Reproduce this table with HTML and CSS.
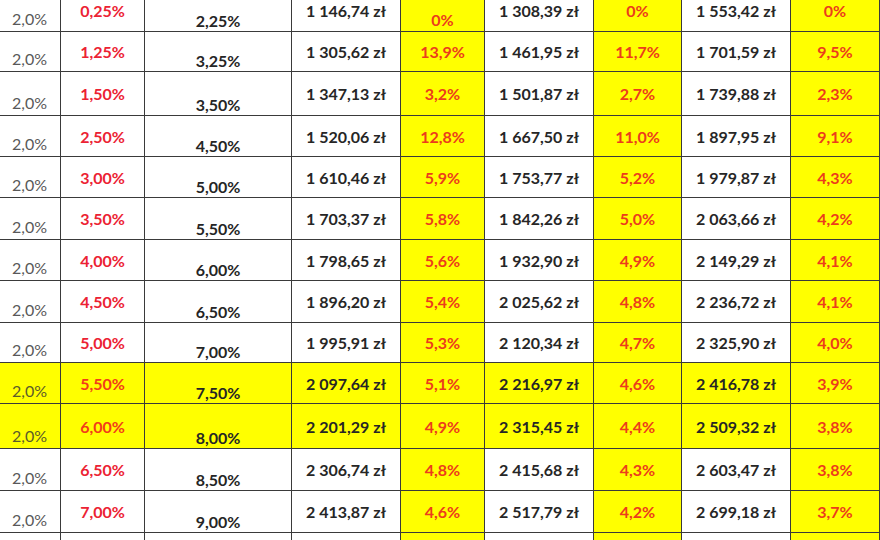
FILE: index.html
```html
<!DOCTYPE html>
<html lang="pl">
<head>
<meta charset="utf-8">
<title>Tabela rat</title>
<link rel="stylesheet" href="styles.css">
</head>
<body>
<div class="viewport">
  <div class="sheet">
    <div class="c c1">2,0%</div><div class="c c2">0,25%</div><div class="c c3">2,25%</div><div class="c c4">1 146,74 zł</div><div class="c cy low">0%</div><div class="c c4">1 308,39 zł</div><div class="c cy">0%</div><div class="c c4">1 553,42 zł</div><div class="c cy">0%</div>
    <div class="c c1">2,0%</div><div class="c c2">1,25%</div><div class="c c3">3,25%</div><div class="c c4">1 305,62 zł</div><div class="c cy">13,9%</div><div class="c c4">1 461,95 zł</div><div class="c cy">11,7%</div><div class="c c4">1 701,59 zł</div><div class="c cy">9,5%</div>
    <div class="c c1">2,0%</div><div class="c c2">1,50%</div><div class="c c3">3,50%</div><div class="c c4">1 347,13 zł</div><div class="c cy">3,2%</div><div class="c c4">1 501,87 zł</div><div class="c cy">2,7%</div><div class="c c4">1 739,88 zł</div><div class="c cy">2,3%</div>
    <div class="c c1">2,0%</div><div class="c c2">2,50%</div><div class="c c3">4,50%</div><div class="c c4">1 520,06 zł</div><div class="c cy">12,8%</div><div class="c c4">1 667,50 zł</div><div class="c cy">11,0%</div><div class="c c4">1 897,95 zł</div><div class="c cy">9,1%</div>
    <div class="c c1">2,0%</div><div class="c c2">3,00%</div><div class="c c3">5,00%</div><div class="c c4">1 610,46 zł</div><div class="c cy">5,9%</div><div class="c c4">1 753,77 zł</div><div class="c cy">5,2%</div><div class="c c4">1 979,87 zł</div><div class="c cy">4,3%</div>
    <div class="c c1">2,0%</div><div class="c c2">3,50%</div><div class="c c3">5,50%</div><div class="c c4">1 703,37 zł</div><div class="c cy">5,8%</div><div class="c c4">1 842,26 zł</div><div class="c cy">5,0%</div><div class="c c4">2 063,66 zł</div><div class="c cy">4,2%</div>
    <div class="c c1">2,0%</div><div class="c c2">4,00%</div><div class="c c3">6,00%</div><div class="c c4">1 798,65 zł</div><div class="c cy">5,6%</div><div class="c c4">1 932,90 zł</div><div class="c cy">4,9%</div><div class="c c4">2 149,29 zł</div><div class="c cy">4,1%</div>
    <div class="c c1">2,0%</div><div class="c c2">4,50%</div><div class="c c3">6,50%</div><div class="c c4">1 896,20 zł</div><div class="c cy">5,4%</div><div class="c c4">2 025,62 zł</div><div class="c cy">4,8%</div><div class="c c4">2 236,72 zł</div><div class="c cy">4,1%</div>
    <div class="c c1">2,0%</div><div class="c c2">5,00%</div><div class="c c3">7,00%</div><div class="c c4">1 995,91 zł</div><div class="c cy">5,3%</div><div class="c c4">2 120,34 zł</div><div class="c cy">4,7%</div><div class="c c4">2 325,90 zł</div><div class="c cy">4,0%</div>
    <div class="c c1 hl">2,0%</div><div class="c c2 hl">5,50%</div><div class="c c3 hl">7,50%</div><div class="c c4 hl">2 097,64 zł</div><div class="c cy">5,1%</div><div class="c c4 hl">2 216,97 zł</div><div class="c cy">4,6%</div><div class="c c4 hl">2 416,78 zł</div><div class="c cy">3,9%</div>
    <div class="c c1 hl">2,0%</div><div class="c c2 hl">6,00%</div><div class="c c3 hl">8,00%</div><div class="c c4 hl">2 201,29 zł</div><div class="c cy">4,9%</div><div class="c c4 hl">2 315,45 zł</div><div class="c cy">4,4%</div><div class="c c4 hl">2 509,32 zł</div><div class="c cy">3,8%</div>
    <div class="c c1">2,0%</div><div class="c c2">6,50%</div><div class="c c3">8,50%</div><div class="c c4">2 306,74 zł</div><div class="c cy">4,8%</div><div class="c c4">2 415,68 zł</div><div class="c cy">4,3%</div><div class="c c4">2 603,47 zł</div><div class="c cy">3,8%</div>
    <div class="c c1">2,0%</div><div class="c c2">7,00%</div><div class="c c3">9,00%</div><div class="c c4">2 413,87 zł</div><div class="c cy">4,6%</div><div class="c c4">2 517,79 zł</div><div class="c cy">4,2%</div><div class="c c4">2 699,18 zł</div><div class="c cy">3,7%</div>
    <div class="c c1"></div><div class="c c2"></div><div class="c c3"></div><div class="c c4"></div><div class="c cy"></div><div class="c c4"></div><div class="c cy"></div><div class="c c4"></div><div class="c cy"></div>
  </div>
</div>
</body>
</html>
```

FILE: styles.css
```css
html, body {
  margin: 0;
  padding: 0;
  background: #ffffff;
}

.viewport {
  width: 880px;
  height: 540px;
  overflow: hidden;
}

.sheet {
  display: grid;
  grid-template-columns: 80px 83px 146px 108px 83px 108px 87px 108px 88px;
  grid-template-rows: 41px 39px 43px 40px 40px 41px 40px 41px 39px 40px 44px 41px 41px 30px;
  gap: 1px;
  padding: 0 1px 0 0;
  background: #3a3a3a;
  width: max-content;
  margin: -10px 0 0 -20px;
  font-family: Lato, "Open Sans", "Liberation Sans", sans-serif;
  font-size: 16px;
  line-height: 19px;
  color: #252525;
}

.c {
  background: #ffffff;
  display: flex;
  align-items: center;
  justify-content: center;
  white-space: nowrap;
}

.c1 {
  justify-content: flex-start;
  align-items: flex-end;
  padding: 0 0 3px 32px;
  color: #595959;
}

.c2 {
  font-weight: 700;
  color: #ec2233;
}

.c3 {
  align-items: flex-end;
  padding-bottom: 1px;
  font-weight: 700;
}

.c4 {
  font-weight: 700;
  color: #262626;
}

.cy {
  background: #ffff00;
  font-weight: 700;
  color: #ec3c1c;
}

.cy.low {
  align-items: flex-end;
  padding-bottom: 2px;
}

.hl {
  background: #ffff00;
}

.c2.hl {
  color: #f23c1a;
}

.c1.hl {
  color: #5c5c2a;
}
```
